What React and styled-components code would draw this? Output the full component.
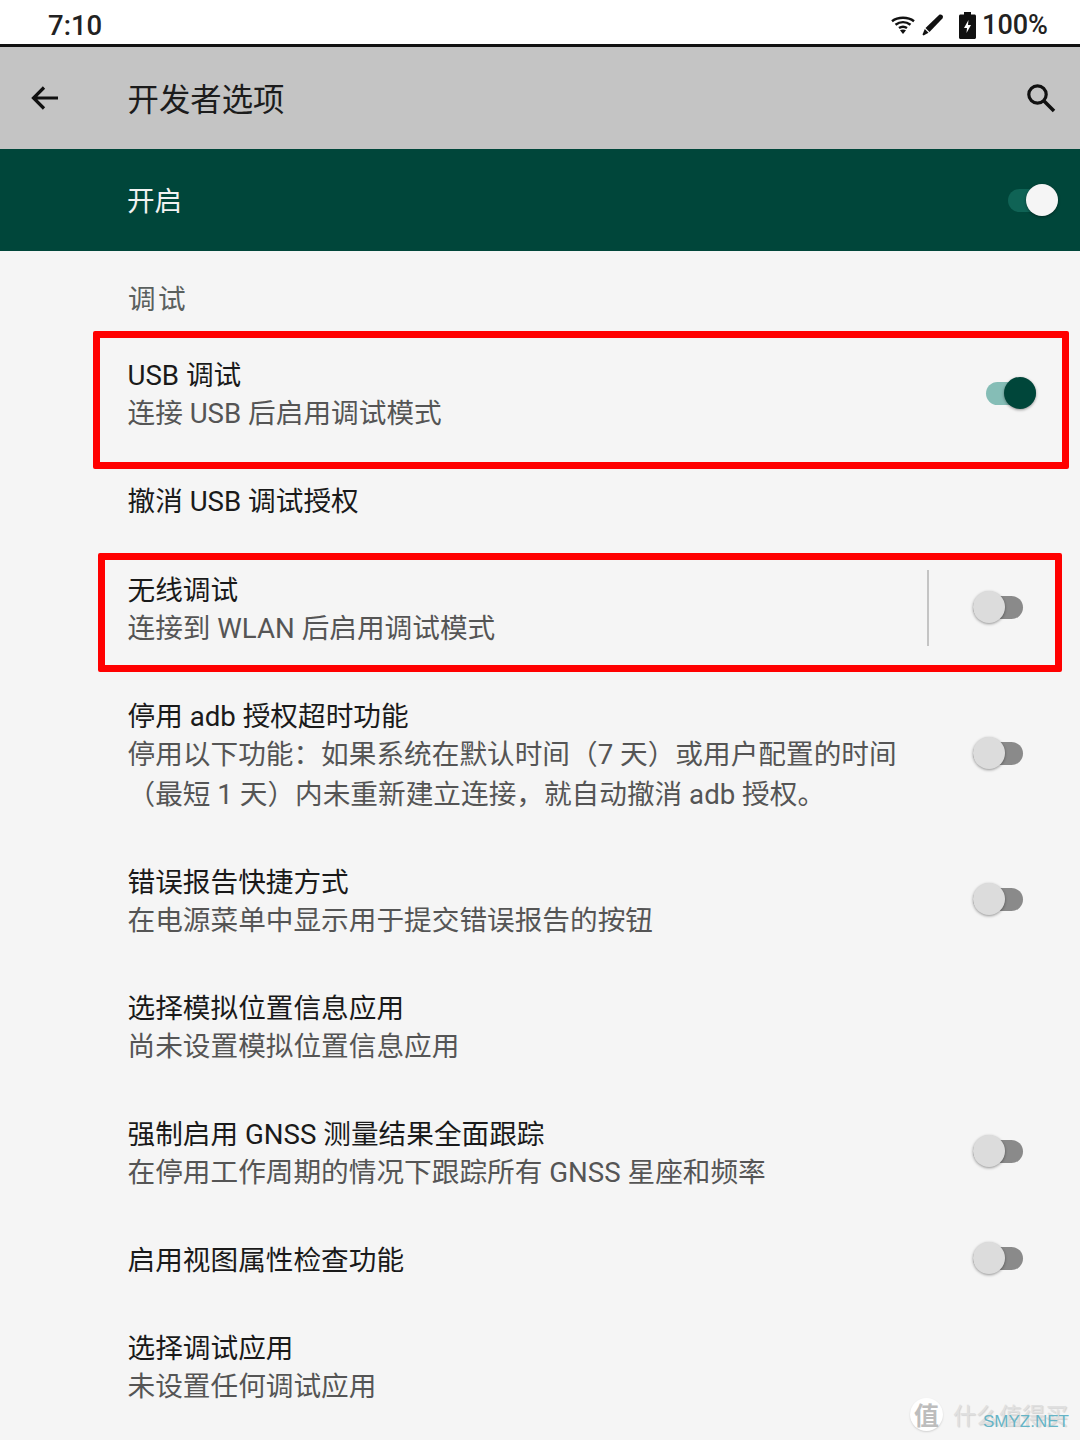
import React from "react";
import styled, { createGlobalStyle } from "styled-components";

const GlobalStyle = createGlobalStyle`
  html, body {
    margin: 0;
    padding: 0;
    background: #f5f5f5;
  }
  body {
    font-family: Roboto, "Noto Sans CJK SC", sans-serif;
  }
`;

const Screen = styled.div`
  position: relative;
  width: 1080px;
  height: 1440px;
  overflow: hidden;
  background: #f5f5f5;
  color: #1f1f1f;
`;

const StatusBar = styled.div`
  height: 38px;
  display: flex;
  align-items: center;
  justify-content: space-between;
  padding: 6px 32px 0 48px;
  background: #fff;
  border-bottom: 3px solid #111;
`;

const Clock = styled.span`
  font-size: 27.5px;
  font-weight: 500;
  color: #222;
`;

const StatusIcons = styled.div`
  display: flex;
  align-items: center;
`;

const Percent = styled.span`
  font-size: 27px;
  font-weight: 500;
  color: #222;
  margin-left: 6px;
`;

const Toolbar = styled.div`
  height: 102px;
  display: flex;
  align-items: center;
  background: #c4c4c4;
  padding: 0 24px 0 30px;
`;

const Title = styled.h1`
  flex: 1;
  margin: -1px 0 0 67.5px;
  font-size: 31.4px;
  font-weight: 400;
  color: #1c1c1c;
`;

const MasterBar = styled.div`
  height: 102px;
  display: flex;
  align-items: center;
  justify-content: space-between;
  box-sizing: border-box;
  padding: 0 22px 0 127px;
  background: #00463a;
  color: #f2f2f2;
  font-size: 27.6px;
`;

const MasterLabel = styled.span`
  margin-top: -3px;
`;

const SectionHeader = styled.div`
  height: 80px;
  box-sizing: border-box;
  padding: 30px 0 0 128px;
  font-size: 27.6px;
  line-height: 38px;
  letter-spacing: 2.5px;
  color: #5a605e;
`;

const Row = styled.div`
  display: flex;
  align-items: center;
  height: ${(p) => p.$height}px;
  box-sizing: border-box;
  padding: 0 ${(p) => p.$right || 57}px 0 127.5px;
`;

const RowText = styled.div`
  flex: 1;
  padding-top: ${(p) => (p.$single ? 1 : 3)}px;
`;

const RowTitle = styled.div`
  font-size: 27.67px;
  line-height: 38px;
  color: #1a1a1a;
`;

const RowSummary = styled.div`
  margin-top: -1px;
  font-size: 27.67px;
  line-height: 40px;
  color: #555;
  white-space: pre-line;
`;

const Divider = styled.div`
  width: 2px;
  height: 76px;
  margin: -3px 44px 0 0;
  background: #c4c4c4;
`;

const Track = styled.div`
  position: relative;
  width: 50px;
  height: 23px;
  margin-top: ${(p) => (p.$on ? -2 : -4)}px;
  border-radius: 12px;
  background: ${(p) => p.$track};
`;

const BarTrack = styled(Track)`
  margin-top: 0;
`;

const Thumb = styled.div`
  position: absolute;
  top: -5px;
  ${(p) => (p.$on ? "right: 0;" : "left: 0;")}
  width: 32px;
  height: 32px;
  border-radius: 50%;
  background: ${(p) => p.$thumb};
  box-shadow: 0 1px 3px rgba(0, 0, 0, 0.4);
`;

const Highlight = styled.div`
  position: absolute;
  left: ${(p) => p.$left}px;
  top: ${(p) => p.$top}px;
  width: ${(p) => p.$width}px;
  height: ${(p) => p.$height}px;
  box-sizing: border-box;
  border: 7px solid #ff0000;
  border-radius: 2px;
`;

const Watermark = styled.div`
  position: absolute;
  left: 910px;
  top: 1397px;
  display: flex;
  align-items: center;
  gap: 10px;
`;

const WatermarkBadge = styled.div`
  width: 33px;
  height: 33px;
  border-radius: 50%;
  background: #fff;
  display: flex;
  align-items: center;
  justify-content: center;
  font-size: 25px;
  font-weight: 700;
  color: #bdbdbd;
  box-shadow: 0 1px 2px rgba(0, 0, 0, 0.15);
`;

const WatermarkText = styled.div`
  font-size: 23px;
  color: #e0e0e0;
  text-shadow: 1px 1px 1px rgba(0, 0, 0, 0.15);
  white-space: nowrap;
`;

const SiteMark = styled.div`
  position: absolute;
  left: 983px;
  top: 1412px;
  font-family: "Liberation Sans", sans-serif;
  font-size: 17px;
  line-height: 20px;
  color: #66b4c6;
  white-space: nowrap;
`;

const Toggle = ({ on }) => (
  <Track $on={on} $track={on ? "#85bdb6" : "#8a8a8a"}>
    <Thumb $on={on} $thumb={on ? "#00463a" : "#dcdcdc"} />
  </Track>
);

const WifiIcon = () => (
  <svg width="24" height="18" viewBox="0 0 24 18">
    <g fill="none" stroke="#111" strokeWidth="2.500">
      <path d="M1 5.200C7 .6 17 .6 23 5.200" />
      <path d="M4.500 8.700C9 5.400 15 5.400 19.500 8.700" />
      <path d="M8 12c2.400-1.600 5.600-1.600 8 0" />
    </g>
    <path d="M12 18l-3-3.700c1.800-1.100 4.200-1.100 6 0z" fill="#111" />
  </svg>
);

const PenIcon = () => (
  <svg width="22" height="22" viewBox="0 0 22 22" style={{ marginLeft: 7 }}>
    <path d="M17 1c1-.8 2.400-.6 3.300.3.900.9.900 2.200.1 3.100L7.500 18 3.500 14z" fill="#111" />
    <path d="M2.800 15l3.700 3.700L1.500 21.500.5 20.500z" fill="#111" />
  </svg>
);

const BatteryIcon = () => (
  <svg width="17" height="27" viewBox="0 0 17 27" style={{ marginLeft: 15 }}>
    <path d="M5 0h7v2.500h3.500c.8 0 1.500.7 1.500 1.500v21.500c0 .8-.7 1.500-1.500 1.500h-14C.7 27 0 26.300 0 25.500V4c0-.8.7-1.500 1.500-1.500H5z" fill="#111" />
    <path d="M9.500 8L5 16h3l-.5 5L12 13H9z" fill="#fff" />
  </svg>
);

const BackIcon = () => (
  <svg width="30" height="28" viewBox="0 0 30 28">
    <path d="M28 14H4M14 3.500L3.500 14 14 24.500" fill="none" stroke="#111" strokeWidth="3.200" />
  </svg>
);

const SearchIcon = () => (
  <svg width="30" height="30" viewBox="0 0 30 30">
    <circle cx="11.500" cy="11.500" r="8.700" fill="none" stroke="#111" strokeWidth="3.200" />
    <path d="M18 18l10 10" stroke="#111" strokeWidth="3.600" />
  </svg>
);

const rows = [
  { height: 126, title: "USB 调试", summary: "连接 USB 后启用调试模式", toggle: "on", right: 44 },
  { height: 89, title: "撤消 USB 调试授权" },
  { height: 126, title: "无线调试", summary: "连接到 WLAN 后启用调试模式", toggle: "off", divider: true },
  {
    height: 166,
    title: "停用 adb 授权超时功能",
    summary: "停用以下功能：如果系统在默认时间（7 天）或用户配置的时间\n（最短 1 天）内未重新建立连接，就自动撤消 adb 授权。",
    toggle: "off",
  },
  { height: 126, title: "错误报告快捷方式", summary: "在电源菜单中显示用于提交错误报告的按钮", toggle: "off" },
  { height: 126, title: "选择模拟位置信息应用", summary: "尚未设置模拟位置信息应用" },
  { height: 126, title: "强制启用 GNSS 测量结果全面跟踪", summary: "在停用工作周期的情况下跟踪所有 GNSS 星座和频率", toggle: "off" },
  { height: 88, title: "启用视图属性检查功能", toggle: "off" },
  { height: 126, title: "选择调试应用", summary: "未设置任何调试应用" },
];

const App = () => (
  <Screen>
    <GlobalStyle />
    <StatusBar>
      <Clock>7:10</Clock>
      <StatusIcons>
        <WifiIcon />
        <PenIcon />
        <BatteryIcon />
        <Percent>100%</Percent>
      </StatusIcons>
    </StatusBar>
    <Toolbar>
      <BackIcon />
      <Title>开发者选项</Title>
      <SearchIcon />
    </Toolbar>
    <MasterBar>
      <MasterLabel>开启</MasterLabel>
      <BarTrack $track="#0f6355">
        <Thumb $on $thumb="#f5f5f5" />
      </BarTrack>
    </MasterBar>
    <SectionHeader>调试</SectionHeader>
    {rows.map((row) => (
      <Row key={row.title} $height={row.height} $right={row.right}>
        <RowText $single={!row.summary}>
          <RowTitle>{row.title}</RowTitle>
          {row.summary && <RowSummary>{row.summary}</RowSummary>}
        </RowText>
        {row.divider && <Divider />}
        {row.toggle && <Toggle on={row.toggle === "on"} />}
      </Row>
    ))}
    <Highlight $left={93} $top={331} $width={976} $height={138} />
    <Highlight $left={98} $top={553} $width={964} $height={119} />
    <Watermark>
      <WatermarkBadge>值</WatermarkBadge>
      <WatermarkText>什么值得买</WatermarkText>
    </Watermark>
    <SiteMark>SMYZ.NET</SiteMark>
  </Screen>
);

export default App;
